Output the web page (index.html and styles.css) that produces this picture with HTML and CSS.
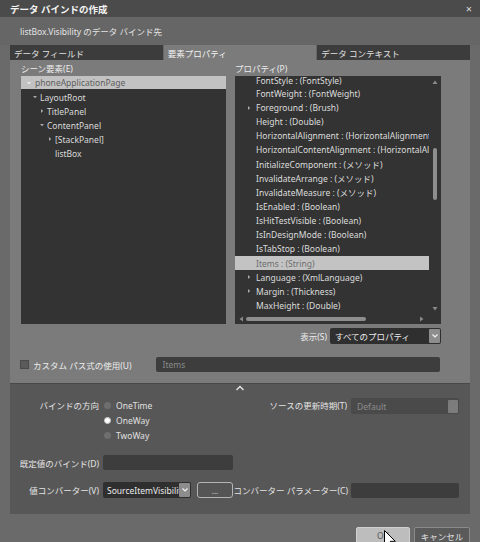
FILE: index.html
```html
<!DOCTYPE html>
<html lang="ja">
<head>
<meta charset="utf-8">
<title>データ バインドの作成</title>
<link rel="stylesheet" href="styles.css">
</head>
<body>
<div class="window">
  <div class="titlebar">
    <span class="title">データ バインドの作成</span>
    <span class="close">×</span>
  </div>
  <div class="target">listBox.Visibility のデータ バインド先</div>
  <div class="tabs">
    <div class="tab">データ フィールド</div>
    <div class="tab active">要素プロパティ</div>
    <div class="tab">データ コンテキスト</div>
  </div>
  <div class="panel">
    <div class="cols">
      <div class="col">
        <div class="label">シーン要素(E)</div>
        <div class="tree">
          <div class="node sel lv0"><svg class="arr" viewBox="0 0 6 6"><path d="M1 2h4L3 4.2z" fill="#ececec"/></svg>phoneApplicationPage</div>
          <div class="node lv1"><svg class="arr" viewBox="0 0 6 6"><path d="M1 2h4L3 4.2z" fill="#a8a8a8"/></svg>LayoutRoot</div>
          <div class="node lv2"><svg class="arr" viewBox="0 0 6 6"><path d="M2 1v4L4.2 3z" fill="#a8a8a8"/></svg>TitlePanel</div>
          <div class="node lv2"><svg class="arr" viewBox="0 0 6 6"><path d="M1 2h4L3 4.2z" fill="#a8a8a8"/></svg>ContentPanel</div>
          <div class="node lv3"><svg class="arr" viewBox="0 0 6 6"><path d="M2 1v4L4.2 3z" fill="#a8a8a8"/></svg>[StackPanel]</div>
          <div class="node lv3"><span class="arr"></span>listBox</div>
        </div>
      </div>
      <div class="col">
        <div class="label">プロパティ(P)</div>
        <div class="props">
          <div class="plist">
            <div class="prows">
              <div class="prow first"><span class="pa"></span><span class="pt">FontStyle : (FontStyle)</span></div>
              <div class="prow"><span class="pa"></span>FontWeight : (FontWeight)</div>
              <div class="prow"><svg class="pa" viewBox="0 0 6 6"><path d="M2 1v4L4.2 3z" fill="#a8a8a8"/></svg>Foreground : (Brush)</div>
              <div class="prow"><span class="pa"></span>Height : (Double)</div>
              <div class="prow"><span class="pa"></span>HorizontalAlignment : (HorizontalAlignment)</div>
              <div class="prow"><span class="pa"></span>HorizontalContentAlignment : (HorizontalAlignment)</div>
              <div class="prow"><span class="pa"></span>InitializeComponent : (メソッド)</div>
              <div class="prow"><span class="pa"></span>InvalidateArrange : (メソッド)</div>
              <div class="prow"><span class="pa"></span>InvalidateMeasure : (メソッド)</div>
              <div class="prow"><span class="pa"></span>IsEnabled : (Boolean)</div>
              <div class="prow"><span class="pa"></span>IsHitTestVisible : (Boolean)</div>
              <div class="prow"><span class="pa"></span>IsInDesignMode : (Boolean)</div>
              <div class="prow"><span class="pa"></span>IsTabStop : (Boolean)</div>
              <div class="prow sel"><span class="pa"></span>Items : (String)</div>
              <div class="prow"><svg class="pa" viewBox="0 0 6 6"><path d="M2 1v4L4.2 3z" fill="#a8a8a8"/></svg>Language : (XmlLanguage)</div>
              <div class="prow"><svg class="pa" viewBox="0 0 6 6"><path d="M2 1v4L4.2 3z" fill="#a8a8a8"/></svg>Margin : (Thickness)</div>
              <div class="prow"><span class="pa"></span>MaxHeight : (Double)</div>
            </div>
          </div>
          <div class="vscroll">
            <svg class="sarrow" viewBox="0 0 8 6"><path d="M1.5 5h5L4 1.5z" fill="#8a8a8a"/></svg>
            <div class="vtrack"><div class="vthumb"></div></div>
            <svg class="sarrow" viewBox="0 0 8 6"><path d="M1.5 1h5L4 4.5z" fill="#8a8a8a"/></svg>
          </div>
          <div class="hscroll">
            <svg class="harrow" viewBox="0 0 6 8"><path d="M5 1.5v5L1.5 4z" fill="#8a8a8a"/></svg>
            <div class="htrack"><div class="hthumb"></div></div>
            <svg class="harrow" viewBox="0 0 6 8"><path d="M1 1.5v5L4.5 4z" fill="#8a8a8a"/></svg>
          </div>
          <div class="corner"></div>
        </div>
      </div>
    </div>
    <div class="show-row">
      <span class="lbl">表示(S)</span>
      <div class="select show-select">
        <span class="sel-text">すべてのプロパティ</span>
        <span class="sel-btn"><svg viewBox="0 0 8 6"><path d="M1.5 1.5L4 4l2.5-2.5" fill="none" stroke="#f0f0f0" stroke-width="1.2"/></svg></span>
      </div>
    </div>
    <div class="custom-row">
      <span class="checkbox"></span>
      <span class="lbl">カスタム パス式の使用(U)</span>
      <div class="input path-input">Items</div>
    </div>
  </div>
  <div class="advanced">
    <div class="chev"><svg viewBox="0 0 10 6"><path d="M1.5 5L5 1.5 8.5 5" fill="none" stroke="#e6e6e6" stroke-width="1.4"/></svg></div>
    <div class="adv-grid">
      <div class="alabel r1">バインドの方向</div>
      <div class="radios">
        <div class="radio"><span class="dot"></span>OneTime</div>
        <div class="radio on"><span class="dot"></span>OneWay</div>
        <div class="radio"><span class="dot"></span>TwoWay</div>
      </div>
      <div class="alabel r1">ソースの更新時期(T)</div>
      <div class="select upd-select"><span class="sel-text dim">Default</span><span class="sq"></span></div>

      <div class="alabel">既定値のバインド(D)</div>
      <div class="input"></div>
      <div></div>
      <div></div>

      <div class="alabel">値コンバーター(V)</div>
      <div class="conv">
        <div class="select conv-select">
          <span class="sel-text">SourceItemVisibility</span>
          <span class="sel-btn"><svg viewBox="0 0 8 6"><path d="M1.5 1.5L4 4l2.5-2.5" fill="none" stroke="#f0f0f0" stroke-width="1.2"/></svg></span>
        </div>
        <div class="dots">...</div>
      </div>
      <div class="alabel tight">コンバーター パラメーター(C)</div>
      <div class="input"></div>
    </div>
  </div>
  <div class="buttons">
    <div class="btn ok">OK</div>
    <div class="btn cancel">キャンセル</div>
  </div>
  <svg class="cursor" viewBox="0 0 12 19"><path d="M0.5 0.5v15l3.6-3.4 2.4 5.6 2.2-1-2.4-5.4h5z" fill="#fff" stroke="#000" stroke-width="1"/></svg>
</div>
</body>
</html>
```
FILE: styles.css
```css
* { box-sizing: border-box; }
html, body { margin: 0; padding: 0; background: #6a6a6a; }
body {
  font-family: "Noto Sans", "Noto Sans CJK JP", sans-serif;
  font-size: 8.5px;
  color: #e2e2e2;
}
.window {
  position: relative;
  width: 480px;
  height: 542px;
  overflow: hidden;
  background: #6a6a6a;
}
.titlebar {
  height: 17px;
  background: #4b4b4b;
  display: flex;
  align-items: center;
  justify-content: space-between;
  padding: 0 8px 0 10px;
}
.title { font-weight: bold; font-size: 9.5px; color: #f4f4f4; }
.close { font-size: 11px; color: #d8d8d8; }
.target {
  height: 28px;
  padding-left: 20px;
  display: flex;
  align-items: center;
  color: #e4e4e4;
  background: #666;
}
.tabs {
  display: flex;
  gap: 1px;
  margin: 0 10px;
  height: 15px;
  background: #666;
}
.tab {
  flex: 1;
  background: #3c3c3c;
  color: #e0e0e0;
  padding-left: 4px;
  display: flex;
  align-items: center;
}
.tab.active { background: #7b7b7b; color: #f2f2f2; }
.panel {
  margin: 0 10px;
  height: 323px;
  background: #7b7b7b;
  padding: 3px 29px 0 11px;
}
.cols { display: flex; gap: 9px; }
.col { width: 205px; }
.col + .col { width: 206px; }
.label { height: 13px; line-height: 12px; color: #ececec; }
.tree {
  height: 248px;
  background: #333;
}
.node {
  height: 14px;
  display: flex;
  align-items: center;
  color: #dadada;
}
.node.sel { background: #c2c2c2; color: #5e5e5e; height: 13px; margin-bottom: 1px; }
.arr { width: 6px; height: 6px; margin-right: 2px; flex: none; }
.lv0 { padding-left: 5px; }
.lv0 .arr { margin-right: 3px; }
.lv1 { padding-left: 11px; }
.lv2 { padding-left: 18px; }
.lv3 { padding-left: 26px; }
.props {
  height: 248px;
  background: #333;
  display: grid;
  grid-template-columns: 1fr 12px;
  grid-template-rows: 1fr 10px;
}
.plist { overflow: hidden; }
.prow {
  height: 14.15px;
  display: flex;
  align-items: center;
  white-space: nowrap;
  color: #dcdcdc;
  padding-left: 11px;
  overflow: hidden;
}
.prow.first {
  height: 10.35px;
  align-items: flex-start;
  overflow: visible;
}
.prow.first .pt { line-height: 9px; display: block; margin-top: -0.5px; }
.prow.sel { background: #c3c3c3; color: #6c6c6c; }
.pa { width: 6px; height: 6px; flex: none; margin-right: 4px; display: inline-block; align-self: center; }
.vscroll {
  display: flex;
  flex-direction: column;
  align-items: center;
  padding: 3px 0 2px;
}
.sarrow { width: 8px; height: 6px; flex: none; }
.vtrack { flex: 1; width: 100%; }
.vthumb {
  margin: 63px auto 0;
  width: 4px;
  height: 52px;
  background: #8e8e8e;
  border-radius: 2px;
}
.hscroll {
  display: flex;
  align-items: center;
  padding: 0 4px 0 3px;
}
.harrow { width: 6px; height: 8px; flex: none; }
.htrack { flex: 1; padding: 0 2px; }
.hthumb { width: 120px; height: 4px; background: #8e8e8e; border-radius: 2px; }
.corner { background: #333; }
.show-row {
  margin-top: 4px;
  height: 16px;
  display: flex;
  justify-content: flex-end;
  align-items: center;
  gap: 3px;
}
.lbl { color: #ececec; }
.select {
  display: flex;
  align-items: center;
  background: #2f2f2f;
  border-radius: 2px;
  height: 16px;
  padding-left: 5px;
}
.show-select { width: 111px; }
.sel-text { flex: 1; white-space: nowrap; overflow: hidden; color: #ececec; }
.sel-btn {
  width: 11px;
  height: 14px;
  margin-right: 1px;
  background: #8d8d8d;
  border-radius: 1px;
  display: flex;
  align-items: center;
  justify-content: center;
  flex: none;
}
.sel-btn svg { width: 8px; height: 6px; }
.custom-row {
  margin-top: 13px;
  margin-left: -1px;
  margin-right: 1px;
  height: 15px;
  display: flex;
  align-items: center;
}
.checkbox {
  width: 9px;
  height: 9px;
  background: #5a5a5a;
  border: 1px solid #4a4a4a;
  margin-right: 4px;
  flex: none;
}
.input {
  height: 15px;
  background: #3d3d3d;
  border-radius: 2px;
}
.path-input {
  margin-left: 24px;
  flex: 1;
  padding-left: 7px;
  color: #8a8a8a;
  line-height: 15px;
}
.advanced {
  margin: 0 10px;
  height: 131px;
  background: #575757;
  border-top: 1px solid #484848;
}
.chev { height: 14px; display: flex; justify-content: center; padding-top: 1px; }
.chev svg { width: 10px; height: 6px; }
.adv-grid {
  display: grid;
  grid-template-columns: 93px 130px 118px 108px;
  grid-template-rows: 45px 15px 16px;
  row-gap: 12px;
  align-items: center;
}
.alabel {
  text-align: right;
  padding-right: 4px;
  color: #e4e4e4;
  white-space: nowrap;
}
.alabel.r1 { align-self: start; line-height: 15px; }
.alabel.tight { padding-right: 3px; }
.radios { align-self: start; }
.radio {
  height: 15px;
  display: flex;
  align-items: center;
  color: #e0e0e0;
}
.dot {
  width: 7px;
  height: 7px;
  border-radius: 50%;
  background: #6e6e6e;
  margin: 0 5px 0 1px;
}
.radio.on .dot { background: #fff; border: 1.5px solid #c8c8c8; }
.upd-select {
  align-self: start;
  background: #4a4a4a;
  padding-left: 6px;
}
.dim { color: #8c8c8c; }
.sq { width: 10px; height: 13px; margin-right: 1px; background: #7c7c7c; border-radius: 1px; }
.conv { display: flex; align-items: center; gap: 6px; height: 16px; }
.conv-select { width: 88px; padding-left: 4px; }
.dots {
  width: 36px;
  height: 16px;
  border: 1px solid #b4b4b4;
  border-radius: 3px;
  background: #555;
  color: #d8d8d8;
  display: flex;
  align-items: center;
  justify-content: center;
  font-size: 8px;
}
.buttons {
  display: flex;
  justify-content: flex-end;
  gap: 4px;
  margin-top: 13px;
  padding-right: 10px;
}
.btn {
  height: 17px;
  display: flex;
  align-items: center;
  justify-content: center;
  border-radius: 2px;
}
.ok { width: 54px; background: #bdbdbd; color: #555; border: 1px solid #d0d0d0; }
.cancel { width: 56px; background: #5a5a5a; color: #e0e0e0; border: 1px solid #8a8a8a; }
.cursor {
  position: absolute;
  left: 384px;
  top: 530px;
  width: 12px;
  height: 19px;
}
```
